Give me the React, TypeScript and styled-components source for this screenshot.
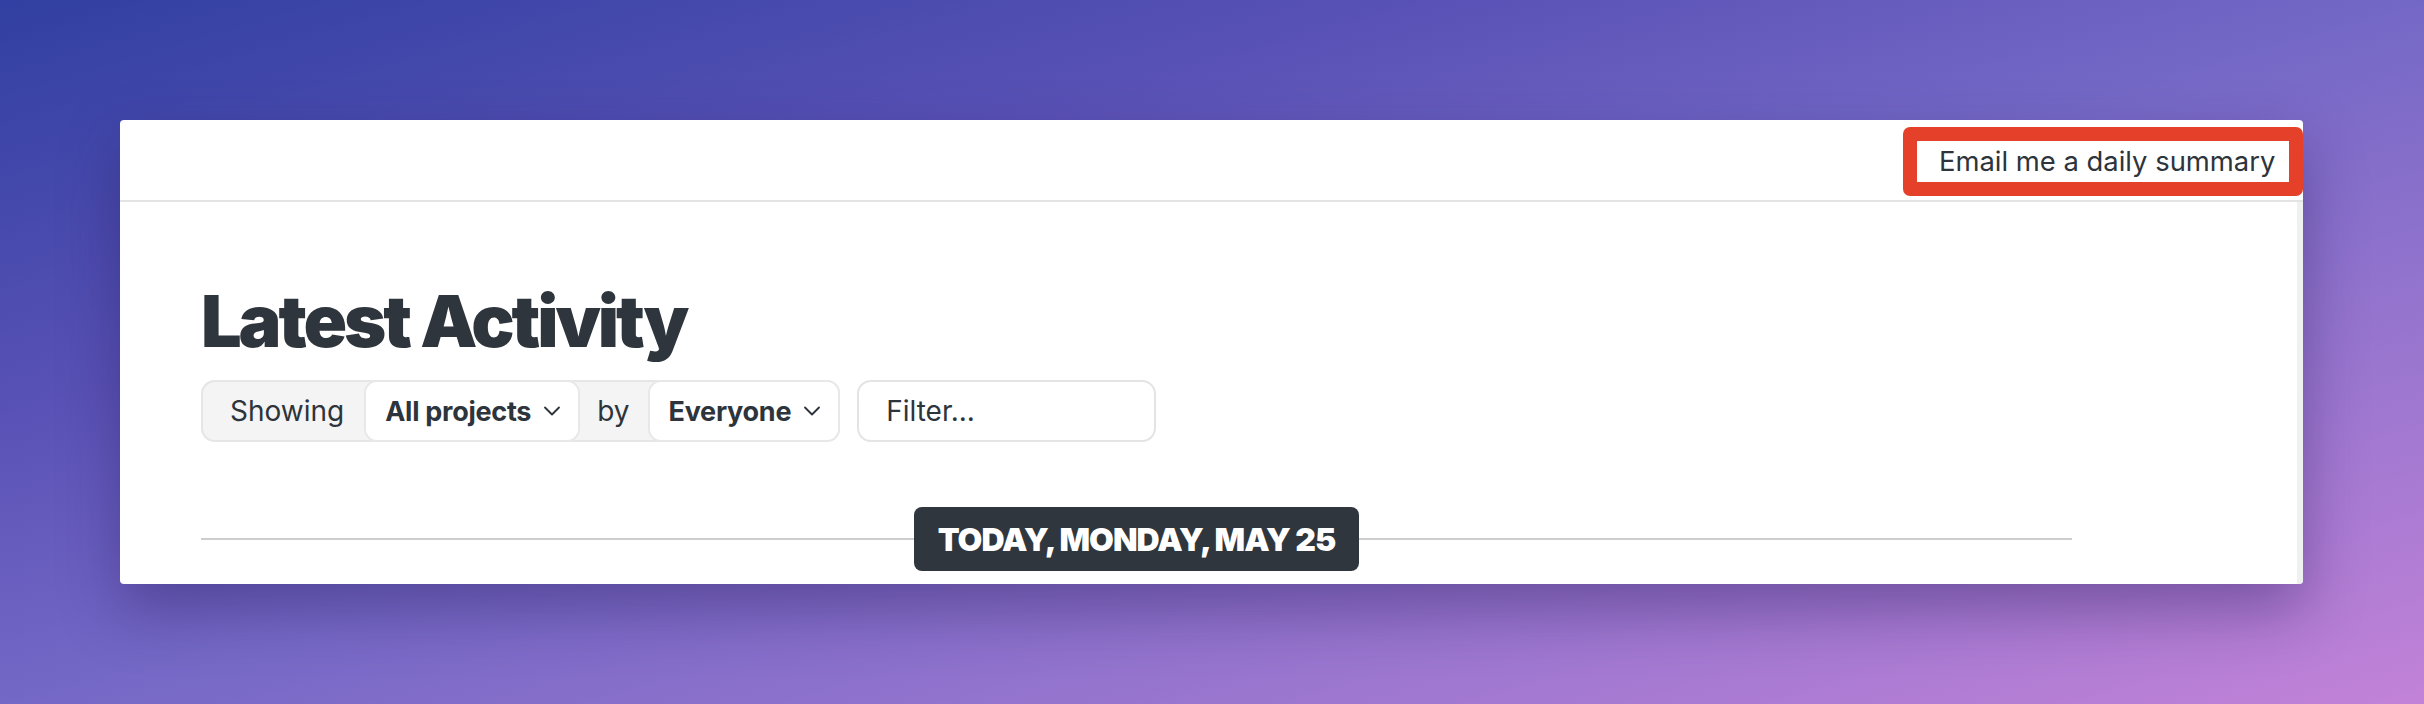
import React from "react";
import styled, { createGlobalStyle } from "styled-components";
import { ChevronDown } from "lucide-react";

const GlobalStyle = createGlobalStyle`
  html, body {
    margin: 0;
    padding: 0;
  }
  body {
    width: 2424px;
    height: 704px;
    overflow: hidden;
    font-family: Inter, "Noto Sans", sans-serif;
    color: #2d343b;
    background: linear-gradient(to bottom right, #3140a2 0%, #5a52b6 30%, #7468c6 50%, #9a76cf 75%, #c282d8 100%);
  }
`;

const Page = styled.div`
  box-sizing: border-box;
  height: 704px;
  padding: 120px 121px 0 120px;
`;

const Card = styled.div`
  width: 2183px;
  height: 464px;
  background: #fff;
  border-radius: 4px;
  overflow: hidden;
  display: flex;
  flex-direction: column;
  box-shadow: 0 26px 60px rgba(40, 24, 90, 0.4);
`;

const Header = styled.header`
  box-sizing: border-box;
  height: 82px;
  flex-shrink: 0;
  display: flex;
  justify-content: flex-end;
  align-items: flex-start;
  padding-top: 7px;
  border-bottom: 2px solid #e3e3e3;
`;

const EmailButton = styled.button`
  box-sizing: border-box;
  height: 69px;
  width: 400px;
  margin: 0;
  padding: 0 17px 0 22px;
  border: 14px solid #e5412a;
  border-radius: 7px;
  background: #fff;
  font-family: Inter, "Noto Sans", sans-serif;
  font-size: 27.4px;
  line-height: 41px;
  color: #2d343b;
  text-align: left;
  white-space: nowrap;
`;

const Body = styled.main`
  flex: 1;
  display: flex;
  flex-direction: column;
  padding: 0 225px 0 81px;
  border-right: 6px solid #eff1f1;
`;

const Title = styled.h1`
  margin: 83px 0 0;
  font-size: 72px;
  line-height: 72px;
  font-weight: 900;
  letter-spacing: -0.043em;
  color: #2e353d;
`;

const FilterRow = styled.div`
  display: flex;
  gap: 17px;
  margin-top: 23px;
`;

const Group = styled.div`
  height: 62px;
  display: flex;
  align-items: center;
  background: #f4f4f4;
  border-radius: 14px;
  box-shadow: inset 0 0 0 2px #e6e6e6;
`;

const Label = styled.span<{ $left: number; $right: number }>`
  padding: 0 ${(p) => p.$right}px 0 ${(p) => p.$left}px;
  font-size: 28px;
  color: #2d343b;
`;

const Dropdown = styled.button`
  box-sizing: border-box;
  height: 62px;
  margin: 0;
  display: flex;
  align-items: center;
  gap: 7px;
  padding: 0 12px 0 19px;
  background: #fff;
  border: 2px solid #e8e8e8;
  border-radius: 13px;
  font-family: Inter, "Noto Sans", sans-serif;
  font-size: 27px;
  font-weight: 700;
  letter-spacing: -0.01em;
  color: #2d343b;
  white-space: nowrap;
`;

const FilterInput = styled.input`
  box-sizing: border-box;
  width: 299px;
  height: 62px;
  margin: 0;
  padding: 0 0 0 27px;
  border: 2px solid #e4e4e4;
  border-radius: 14px;
  background: #fff;
  font-family: Inter, "Noto Sans", sans-serif;
  font-size: 28px;
  color: #2d343b;
  outline: none;
  &::placeholder {
    color: #2d343b;
  }
`;

const DateDivider = styled.div`
  display: flex;
  align-items: center;
  margin-top: 65px;
  &::before,
  &::after {
    content: "";
    flex: 1;
    height: 2px;
    background: #cdcdcd;
  }
`;

const DateBadge = styled.span`
  box-sizing: border-box;
  height: 64px;
  padding: 0 24px;
  display: flex;
  align-items: center;
  background: #2f363d;
  border-radius: 8px;
  color: #fff;
  font-size: 32px;
  font-weight: 900;
  letter-spacing: -0.03em;
  text-transform: uppercase;
  white-space: nowrap;
`;

export default function App() {
  return (
    <>
      <GlobalStyle />
      <Page>
        <Card>
          <Header>
            <EmailButton>Email me a daily summary</EmailButton>
          </Header>
          <Body>
            <Title>Latest Activity</Title>
            <FilterRow>
              <Group>
                <Label $left={29} $right={20}>Showing</Label>
                <Dropdown>
                  All projects <ChevronDown size={28} strokeWidth={1.6} />
                </Dropdown>
                <Label $left={17} $right={18}>by</Label>
                <Dropdown>
                  Everyone <ChevronDown size={28} strokeWidth={1.6} />
                </Dropdown>
              </Group>
              <FilterInput placeholder="Filter..." />
            </FilterRow>
            <DateDivider>
              <DateBadge>Today, Monday, May 25</DateBadge>
            </DateDivider>
          </Body>
        </Card>
      </Page>
    </>
  );
}
